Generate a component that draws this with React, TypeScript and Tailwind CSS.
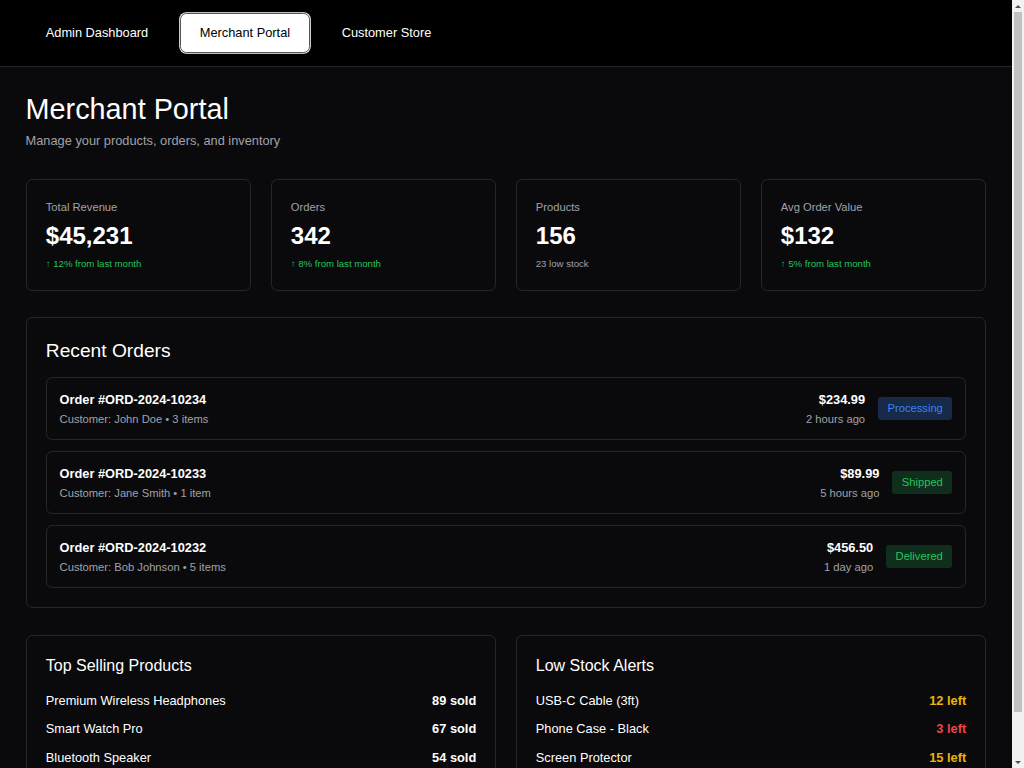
import React from "react";

const stats = [
  { label: "Total Revenue", value: "$45,231", sub: "↑ 12% from last month", green: true },
  { label: "Orders", value: "342", sub: "↑ 8% from last month", green: true },
  { label: "Products", value: "156", sub: "23 low stock", green: false },
  { label: "Avg Order Value", value: "$132", sub: "↑ 5% from last month", green: true },
];

const orders = [
  { id: "ORD-2024-10234", customer: "John Doe", items: "3 items", price: "$234.99", time: "2 hours ago", status: "Processing" },
  { id: "ORD-2024-10233", customer: "Jane Smith", items: "1 item", price: "$89.99", time: "5 hours ago", status: "Shipped" },
  { id: "ORD-2024-10232", customer: "Bob Johnson", items: "5 items", price: "$456.50", time: "1 day ago", status: "Delivered" },
];

const top = [
  { name: "Premium Wireless Headphones", v: "89 sold" },
  { name: "Smart Watch Pro", v: "67 sold" },
  { name: "Bluetooth Speaker", v: "54 sold" },
];

const low = [
  { name: "USB-C Cable (3ft)", v: "12 left", red: false },
  { name: "Phone Case - Black", v: "3 left", red: true },
  { name: "Screen Protector", v: "15 left", red: false },
];

function Badge({ status }: { status: string }) {
  if (status === "Processing")
    return <span className="rounded px-3 py-1 text-sm leading-5 bg-[#172a4a] text-[#3b82f6]">Processing</span>;
  if (status === "Shipped")
    return <span className="rounded px-3 py-1 text-sm leading-5 bg-[#0f2f1c] text-[#22c55e]">Shipped</span>;
  return <span className="rounded px-3 py-1 text-sm leading-5 bg-[#0f2f1c] text-[#22c55e]">Delivered</span>;
}

export default function App() {
  return (
    <div className="flex bg-[#0a0a0c] text-white" style={{ fontFamily: '"Liberation Sans", Arial, sans-serif' }}>
      <div className="flex-1 min-w-0 [zoom:0.8]">
        <header className="bg-black border-b border-[#26262a] px-8 py-4 flex items-center gap-3.5">
          <button className="px-6 py-3 text-base leading-6 font-medium text-white rounded-lg border border-transparent">Admin Dashboard</button>
          <button className="px-6 py-3 text-base leading-6 font-medium text-black bg-white rounded-lg border border-[#555] ring-1 ring-white">Merchant Portal</button>
          <button className="px-6 py-3 text-base leading-6 font-medium text-white rounded-lg border border-transparent">Customer Store</button>
        </header>
        <main className="p-8">
          <h1 className="text-4xl leading-10 font-medium">Merchant Portal</h1>
          <p className="mt-2 text-base leading-6 text-[#a1a1aa]">Manage your products, orders, and inventory</p>

          <div className="mt-9 grid grid-cols-4 gap-6">
            {stats.map((s) => (
              <div key={s.label} className="rounded-lg border border-[#27272a] p-6">
                <div className="text-sm leading-5 text-[#a1a1aa]">{s.label}</div>
                <div className="mt-2 text-3xl leading-9 font-bold">{s.value}</div>
                <div className={`mt-2.5 text-xs leading-4 ${s.green ? "text-[#22c55e]" : "text-[#a1a1aa]"}`}>{s.sub}</div>
              </div>
            ))}
          </div>

          <section className="mt-8 rounded-lg border border-[#27272a] p-6">
            <h2 className="text-2xl leading-9 font-medium mb-3.5">Recent Orders</h2>
            <div className="flex flex-col gap-3.5">
              {orders.map((o) => (
                <div key={o.id} className="flex items-center justify-between rounded-lg border border-[#27272a] px-4 py-[15px]">
                  <div>
                    <div className="text-base leading-6 font-semibold">Order #{o.id}</div>
                    <div className="mt-0.5 text-sm leading-5 text-[#a1a1aa]">Customer: {o.customer} • {o.items}</div>
                  </div>
                  <div className="flex items-center gap-4">
                    <div className="text-right">
                      <div className="text-base leading-6 font-semibold">{o.price}</div>
                      <div className="mt-0.5 text-sm leading-5 text-[#a1a1aa]">{o.time}</div>
                    </div>
                    <Badge status={o.status} />
                  </div>
                </div>
              ))}
            </div>
          </section>

          <div className="mt-[34px] grid grid-cols-2 gap-6">
            <section className="rounded-lg border border-[#27272a] p-6">
              <h2 className="text-xl leading-7 font-medium mb-4">Top Selling Products</h2>
              <div className="flex flex-col gap-3">
                {top.map((t) => (
                  <div key={t.name} className="flex justify-between text-base leading-6">
                    <span>{t.name}</span>
                    <span className="font-semibold">{t.v}</span>
                  </div>
                ))}
              </div>
            </section>
            <section className="rounded-lg border border-[#27272a] p-6">
              <h2 className="text-xl leading-7 font-medium mb-4">Low Stock Alerts</h2>
              <div className="flex flex-col gap-3">
                {low.map((t) => (
                  <div key={t.name} className="flex justify-between text-base leading-6">
                    <span>{t.name}</span>
                    <span className={`font-semibold ${t.red ? "text-[#ef4444]" : "text-[#eab308]"}`}>{t.v}</span>
                  </div>
                ))}
              </div>
            </section>
          </div>
        </main>
      </div>
      <div className="sticky top-0 h-screen w-3 shrink-0 bg-[#f1f1f1] flex flex-col items-center">
        <div className="h-3 flex items-center justify-center">
          <div className="w-0 h-0 border-l-[3px] border-r-[3px] border-b-[3px] border-l-transparent border-r-transparent border-b-[#505050]" />
        </div>
        <div className="w-2 flex-1 mb-[44px] bg-[#c1c1c1]" />
        <div className="h-3 flex items-center justify-center">
          <div className="w-0 h-0 border-l-[3px] border-r-[3px] border-t-[3px] border-l-transparent border-r-transparent border-t-[#505050]" />
        </div>
      </div>
    </div>
  );
}
